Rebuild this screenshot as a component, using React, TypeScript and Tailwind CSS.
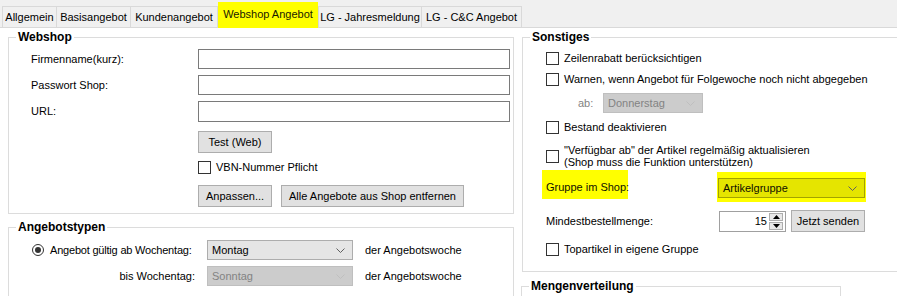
import React from "react";

const tabs = [
  { label: "Allgemein", w: "w-[55px]", edge: "border-l" },
  { label: "Basisangebot", w: "w-[74px]", edge: "" },
  { label: "Kundenangebot", w: "w-[87px]", edge: "" },
  { label: "Webshop Angebot", w: "w-[100px]", edge: "", active: true },
  { label: "LG - Jahresmeldung", w: "w-[104px]", edge: "border-l" },
  { label: "LG - C&C Angebot", w: "w-[100px]", edge: "" },
];

function Chevron({ color = "#606060" }: { color?: string }) {
  return (
    <svg width="9" height="5" viewBox="0 0 9 5" className="shrink-0">
      <polyline points="0.5,0.5 4.5,4.5 8.5,0.5" fill="none" stroke={color} strokeWidth="1" />
    </svg>
  );
}

function Combo({ value, w, disabled = false, yellow = false }: { value: string; w: string; disabled?: boolean; yellow?: boolean }) {
  const tone = yellow
    ? "bg-[#e5e500] border-[#a3a300] text-[#101000]"
    : disabled
      ? "bg-[#cccccc] border-[#bfbfbf] text-[#838383]"
      : "bg-[#e5e5e5] border-[#adadad] text-black";
  return (
    <div className={`${w} h-[20px] border ${tone} flex items-center justify-between pl-[4px] pr-[7px]`}>
      <span>{value}</span>
      <Chevron color={disabled ? "#bfbfbf" : "#606060"} />
    </div>
  );
}

function Box() {
  return <span className="w-[13px] h-[13px] border border-[#333333] bg-white shrink-0" />;
}

function Check({ label }: { label: string }) {
  return (
    <div className="flex items-center gap-[5px] h-[13px]">
      <Box />
      <span>{label}</span>
    </div>
  );
}

function Button({ label, w }: { label: string; w: string }) {
  return (
    <div className={`${w} h-[22px] border border-[#adadad] bg-[#e1e1e1] flex items-center justify-center`}>
      {label}
    </div>
  );
}

function Legend({ title }: { title: string }) {
  return <legend className="ml-[7px] px-[2px] font-bold text-[12px] leading-[14px]">{title}</legend>;
}

export default function App() {
  return (
    <div className="w-[897px] h-[296px] overflow-hidden bg-white text-black text-[11px] leading-[13px] whitespace-nowrap font-['Liberation_Sans',Arial,sans-serif]">
      {/* tab strip */}
      <div className="h-[28px] bg-[#f0f0f0] border-b border-[#d9d9d9] flex items-end pl-[2px]">
        {tabs.map((t) =>
          t.active ? (
            <div key={t.label} className={`${t.w} h-[26px] -mb-[1px] bg-[#ffff00] text-[#1a1a00] flex items-center justify-center pb-[2px]`}>
              {t.label}
            </div>
          ) : (
            <div key={t.label} className={`${t.w} h-[21px] border-t border-r ${t.edge} border-[#d9d9d9] bg-[#f0f0f0] flex items-center justify-center`}>
              {t.label}
            </div>
          )
        )}
      </div>

      <div className="flex">
        {/* left column */}
        <div className="w-[515px] shrink-0 pl-[8px]">
          <fieldset className="mt-[2px] w-[506px] border border-[#dcdcdc]">
            <Legend title="Webshop" />
            <div className="pl-[22px] pt-[5px] pb-[6px] grid grid-cols-[167px_312px] gap-y-[6px] items-center">
              <span>Firmenname(kurz):</span>
              <div className="h-[20px] border border-[#7a7a7a] bg-white" />
              <span>Passwort Shop:</span>
              <div className="h-[20px] border border-[#7a7a7a] bg-white" />
              <span>URL:</span>
              <div className="h-[21px] border border-[#7a7a7a] bg-white" />
              <span />
              <div className="mt-[3px]">
                <Button label="Test (Web)" w="w-[74px]" />
              </div>
              <span />
              <div className="mt-[2px]">
                <Check label="VBN-Nummer Pflicht" />
              </div>
              <span />
              <div className="mt-[5px] flex gap-[9px]">
                <Button label="Anpassen..." w="w-[74px]" />
                <Button label="Alle Angebote aus Shop entfernen" w="w-[183px]" />
              </div>
            </div>
          </fieldset>

          <fieldset className="mt-[6px] w-[506px] h-[90px] border border-[#dcdcdc]">
            <Legend title="Angebotstypen" />
            <div className="pl-[23px] pt-[6px] grid grid-cols-[163px_146px_auto] gap-x-[12px] gap-y-[6px] items-center">
              <div className="flex items-center gap-[6px]">
                <span className="w-[12px] h-[12px] rounded-full border border-[#333333] flex items-center justify-center shrink-0">
                  <span className="w-[6px] h-[6px] rounded-full bg-[#333333]" />
                </span>
                <span className="tracking-[-0.2px]">Angebot gültig ab Wochentag:</span>
              </div>
              <Combo value="Montag" w="w-[146px]" />
              <span>der Angebotswoche</span>
              <span className="text-right">bis Wochentag:</span>
              <Combo value="Sonntag" w="w-[146px]" disabled />
              <span>der Angebotswoche</span>
            </div>
          </fieldset>
        </div>

        {/* right column */}
        <div className="flex-1 pl-[7px]">
          <fieldset className="mt-[2px] w-[400px] border border-[#dcdcdc]">
            <Legend title="Sonstiges" />
            <div className="pl-[23px] pt-[8px] pb-[15px] flex flex-col">
              <Check label="Zeilenrabatt berücksichtigen" />
              <div className="mt-[8px]">
                <Check label="Warnen, wenn Angebot für Folgewoche noch nicht abgegeben" />
              </div>
              <div className="mt-[7px] flex items-center">
                <span className="w-[57px] pl-[32px] text-[#838383]">ab:</span>
                <Combo value="Donnerstag" w="w-[100px]" disabled />
              </div>
              <div className="mt-[8px]">
                <Check label="Bestand deaktivieren" />
              </div>
              <div className="mt-[10px] flex items-center gap-[5px]">
                <Box />
                <div className="leading-[12px]">
                  <div>"Verfügbar ab" der Artikel regelmäßig aktualisieren</div>
                  <div>(Shop muss die Funktion unterstützen)</div>
                </div>
              </div>
              <div className="mt-[2px] flex items-start">
                <div className="w-[172px]">
                  <span className="-ml-[4px] w-[86px] h-[29px] pt-[6px] pl-[4px] bg-[#ffff00] inline-flex items-center text-[#101000]">
                    Gruppe im Shop:
                  </span>
                </div>
                <div className="mt-[2px] -ml-[1px] px-[1px] pt-[6px] pb-[4px] bg-[#ffff00]">
                  <Combo value="Artikelgruppe" w="w-[147px]" yellow />
                </div>
              </div>
              <div className="mt-[8px] flex items-center">
                <span className="w-[173px]">Mindestbestellmenge:</span>
                <div className="w-[67px] h-[21px] border border-[#a0a0a0] bg-white flex items-center justify-end">
                  <span className="pr-[2px]">15</span>
                  <div className="w-[14px] h-[17px] flex flex-col gap-[1px] mr-[2px]">
                    <div className="flex-1 border border-[#adadad] bg-[#e8e8e8] flex items-center justify-center">
                      <svg width="7" height="4" viewBox="0 0 7 4"><polygon points="3.5,0 7,4 0,4" fill="#000" /></svg>
                    </div>
                    <div className="flex-1 border border-[#adadad] bg-[#e8e8e8] flex items-center justify-center">
                      <svg width="7" height="4" viewBox="0 0 7 4"><polygon points="0,0 7,0 3.5,4" fill="#000" /></svg>
                    </div>
                  </div>
                </div>
                <div className="ml-[5px]">
                  <Button label="Jetzt senden" w="w-[74px]" />
                </div>
              </div>
              <div className="mt-[11px]">
                <Check label="Topartikel in eigene Gruppe" />
              </div>
            </div>
          </fieldset>

          <fieldset className="mt-[7px] -ml-[1px] w-[320px] h-[40px] border border-[#dcdcdc]">
            <Legend title="Mengenverteilung" />
          </fieldset>
        </div>
      </div>
    </div>
  );
}
